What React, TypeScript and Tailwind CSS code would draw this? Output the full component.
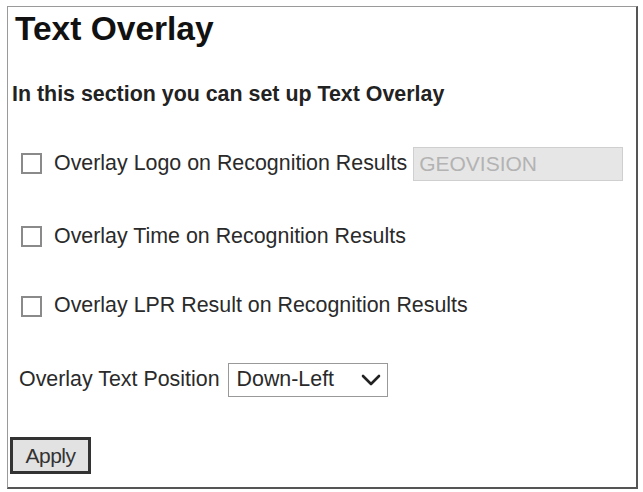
import React, { useState } from 'react';

const font = { fontFamily: '"Liberation Sans", Arial, sans-serif' };

interface CheckRowProps {
  label: string;
  checked: boolean;
  onToggle: () => void;
  children?: React.ReactNode;
}

const CheckRow: React.FC<CheckRowProps> = ({ label, checked, onToggle, children }) => (
  <div className="flex items-center">
    <button
      onClick={onToggle}
      className="ml-[13px] w-[21px] h-[21px] border-2 border-[#8a8a8a] bg-white flex items-center justify-center"
    >
      {checked && <span className="text-[14px] leading-none text-[#333]">✓</span>}
    </button>
    <span className="ml-[12px] text-[21.4px] leading-none text-[#2a2a2a]">{label}</span>
    {children}
  </div>
);

export default function App() {
  const [logo, setLogo] = useState(false);
  const [time, setTime] = useState(false);
  const [lpr, setLpr] = useState(false);
  const [position, setPosition] = useState('Down-Left');

  return (
    <div className="w-[643px] h-[492px] bg-white pt-[6px] pl-[7px]" style={font}>
      <div className="w-[631px] h-[483px] border-l border-t border-[#9a9a9a] border-r-2 border-b-2 border-r-[#555] border-b-[#555] flex flex-col">
        {/* Header */}
        <h1 className="mt-[5px] ml-[7px] text-[33.5px] leading-none font-bold text-[#111]">Text Overlay</h1>
        <p className="mt-[38px] ml-[4px] text-[21.4px] leading-none font-bold text-[#222]">
          In this section you can set up Text Overlay
        </p>

        {/* Options */}
        <div className="mt-[42px]">
          <CheckRow label="Overlay Logo on Recognition Results" checked={logo} onToggle={() => setLogo(!logo)}>
            <div className="ml-[6px] w-[210px] h-[34px] bg-[#e6e6e6] border border-[#cfcfcf] flex items-center pl-[5px] text-[21px] text-[#b3b3b3]">
              GEOVISION
            </div>
          </CheckRow>
        </div>
        <div className="mt-[45px]">
          <CheckRow label="Overlay Time on Recognition Results" checked={time} onToggle={() => setTime(!time)} />
        </div>
        <div className="mt-[48px]">
          <CheckRow label="Overlay LPR Result on Recognition Results" checked={lpr} onToggle={() => setLpr(!lpr)} />
        </div>

        <div className="mt-[46px] ml-[11px] flex items-center">
          <span className="text-[21.4px] leading-none text-[#2a2a2a]">Overlay Text Position</span>
          <div
            className="ml-[8px] w-[160px] h-[34px] border border-[#999] flex items-center justify-between pl-[8px] pr-[6px]"
            onClick={() => setPosition(position === 'Down-Left' ? 'Down-Right' : 'Down-Left')}
          >
            <span className="text-[21.4px] leading-none text-[#2a2a2a]">{position}</span>
            <svg width="20" height="12" viewBox="0 0 20 12" fill="none">
              <path d="M2 2 L10 10 L18 2" stroke="#222" strokeWidth="2.6" strokeLinecap="round" strokeLinejoin="round" />
            </svg>
          </div>
        </div>

        <div className="mt-[40px] ml-[2px]">
          <button className="w-[81px] h-[37px] bg-[#e2e2e2] border-[3px] border-[#333] text-[21px] text-[#333] leading-none tracking-[-0.5px]">
            Apply
          </button>
        </div>
      </div>
    </div>
  );
}
